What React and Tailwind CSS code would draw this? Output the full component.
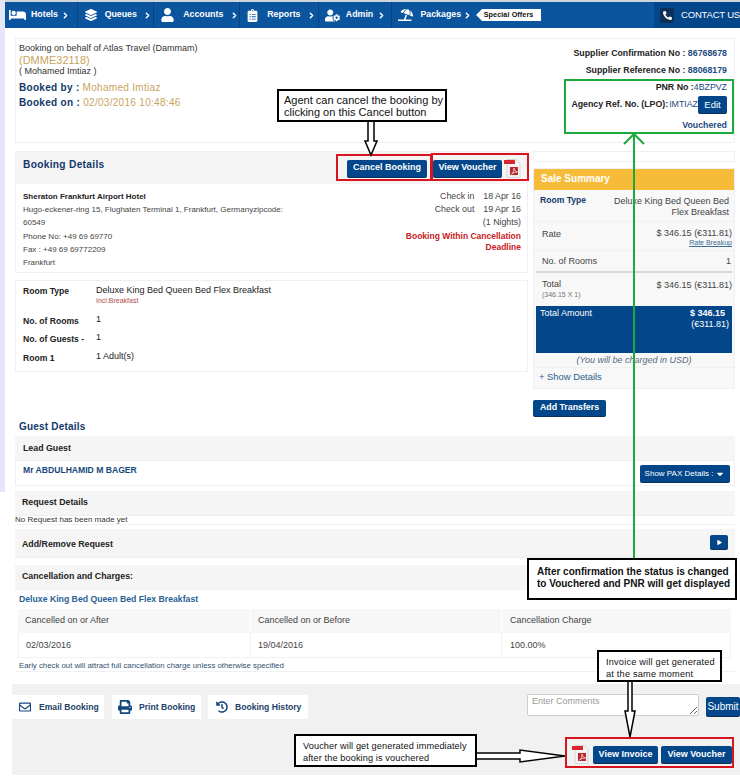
import { FaBed, FaLayerGroup, FaUser, FaUserCog, FaUmbrellaBeach, FaPhone, FaPrint, FaHistory, FaRegEnvelope, FaClipboardList, FaCaretDown, FaPlay } from 'react-icons/fa';
import { ChevronRight } from 'lucide-react';

const navItems = [
  { label: 'Hotels', icon: FaBed, width: 'w-[73px]', iconSize: 'w-[17px] h-[14px] ml-[4px]', gap: 'gap-[5px]' },
  { label: 'Queues', icon: FaLayerGroup, width: 'w-[77px]', iconSize: 'w-[12px] h-[12px] ml-[7px]', gap: 'gap-[8px]' },
  { label: 'Accounts', icon: FaUser, width: 'w-[86px]', iconSize: 'w-[13px] h-[14px] ml-[7px]', gap: 'gap-[9px]' },
  { label: 'Reports', icon: FaClipboardList, width: 'w-[79px]', iconSize: 'w-[11px] h-[13px] ml-[7px]', gap: 'gap-[9px]' },
  { label: 'Admin', icon: FaUserCog, width: 'w-[74px]', iconSize: 'w-[15px] h-[13px] ml-[6px]', gap: 'gap-[6px]' },
];

function PdfIcon() {
  return (
    <svg width="17" height="19" viewBox="0 0 17 19" className="shrink-0">
      <path d="M3 0.5h9l4 4v14H3z" fill="#f4f4f4" stroke="#d5d5d5" />
      <rect x="0" y="1" width="11" height="4" fill="#d8262c" />
      <rect x="6" y="8" width="8" height="8" fill="#b8272c" />
      <path d="M7.5 15c2-1.5 2.5-3.5 2.5-6 .5 2.5 1.5 3.5 3.5 4-2 0-4 .5-6 2z" fill="none" stroke="#fff" strokeWidth="0.7" />
    </svg>
  );
}

function BlueButton({ children, className = '' }) {
  return (
    <button className={`bg-[#03478a] text-white font-bold rounded-[2px] flex items-center justify-center whitespace-nowrap shadow-[0_1px_0_#0a2f5a] ${className}`}>
      {children}
    </button>
  );
}

function Callout({ className, children }) {
  return (
    <div className={`absolute bg-white border-2 border-black text-[#111] leading-[12px] ${className}`}>
      {children}
    </div>
  );
}

function GrayHead({ children, className = '' }) {
  return (
    <div className={`bg-[#f5f5f5] flex items-center justify-between text-[8.8px] font-bold text-[#222] ${className}`}>
      {children}
    </div>
  );
}

export default function App() {
  return (
    <div className="relative w-[740px] h-[777px] overflow-hidden bg-white text-[#333] font-['Liberation_Sans',Arial,sans-serif]">
      <div className="absolute left-0 top-0 w-[5px] h-[492px] bg-[#e6e6fb]" />

      {/* nav */}
      <div className="h-[2px] bg-[#cfd3da]" />
      <nav className="ml-[5px] h-[26px] bg-[#0b559f] flex items-center text-white text-[8.8px] font-bold">
        {navItems.map((item) => {
          const Icon = item.icon;
          return (
            <div key={item.label} className={`${item.width} h-full flex items-center ${item.gap} border-r border-[#094480]`}>
              <Icon className={`${item.iconSize} shrink-0`} />
              <span>{item.label}</span>
              <ChevronRight size={9} strokeWidth={4} className="-ml-[2px]" />
            </div>
          );
        })}
        <div className="flex items-center h-full w-[263px]">
          <FaUmbrellaBeach className="w-[15px] h-[14px] ml-[6px] shrink-0" />
          <span className="ml-[7px]">Packages</span>
          <ChevronRight size={9} strokeWidth={4} className="ml-[2px]" />
          <span className="ml-[4px] h-[12px] w-[65px] bg-white text-[#111] text-[7.2px] tracking-[0.1px] flex items-center justify-center [clip-path:polygon(6px_0,100%_0,100%_100%,6px_100%,0_50%)]">
            Special Offers
          </span>
        </div>
        <div className="flex-1 h-full bg-[#03478a] flex items-center gap-[7px] pl-[6px] font-normal text-[9.5px] tracking-[-0.2px] whitespace-nowrap">
          <span className="w-[14px] h-[15px] bg-[#0f2f57] rounded-[2px] flex items-center justify-center">
            <FaPhone className="w-[9px] h-[9px] scale-x-[-1]" />
          </span>
          CONTACT US
        </div>
      </nav>

      <main className="ml-[15px] w-[720px]">
        {/* booking head */}
        <section className="mt-[10px] h-[105px] border border-[#eef0f5] flex justify-between pl-[3px] pr-[7px] text-[9px]">
          <div className="pt-[4px]">
            <div className="leading-[11px]">Booking on behalf of Atlas Travel (Dammam)</div>
            <div className="text-[11px] leading-[12px] text-[#c9a35e]">(DMME32118)</div>
            <div className="leading-[11px]">( Mohamed Imtiaz )</div>
            <div className="mt-[3px] text-[10px] leading-[15px] font-bold text-[#12386a] tracking-[0.3px]">
              Booked by : <span className="font-normal text-[#c9a35e]">Mohamed Imtiaz</span>
            </div>
            <div className="text-[10px] leading-[15px] font-bold text-[#12386a] tracking-[0.3px]">
              Booked on : <span className="font-normal text-[#c9a35e]">02/03/2016 10:48:46</span>
            </div>
          </div>
          <div className="pt-[6px] text-right text-[8.8px] font-bold text-[#222] leading-[17px]">
            <div>Supplier Confirmation No : <span className="text-[#1d4a80]">86768678</span></div>
            <div>Supplier Reference No : <span className="text-[#1d4a80]">88068179</span></div>
            <div className="leading-[17px]">PNR No :<span className="font-normal text-[#1d4a80]">4BZPVZ</span></div>
            <div className="flex items-center justify-end h-[17px]">
              Agency Ref. No. (LPO):<span className="ml-[1px] font-normal text-[#1d4a80]">IMTIAZ</span>
              <BlueButton className="w-[29px] h-[17px] text-[9.5px] font-normal">Edit</BlueButton>
            </div>
            <div className="mt-[4px] text-[#1d4a80]">Vouchered</div>
          </div>
        </section>

        <div className="mt-[8px] flex gap-[5px]">
          {/* left column */}
          <div className="w-[513px]">
            <div className="border border-[#eef0f5] h-[122px]">
              <div className="bg-[#f5f5f5] h-[32px] flex items-center justify-between pl-[7px] pr-[6px]">
                <h2 className="text-[10.2px] font-bold text-[#12386a] tracking-[0.3px] -mt-[7px]">Booking Details</h2>
                <div className="flex items-center">
                  <BlueButton className="w-[80px] h-[17px] text-[9px]">Cancel Booking</BlueButton>
                  <BlueButton className="ml-[6px] w-[69px] h-[17px] text-[9px]">View Voucher</BlueButton>
                  <span className="ml-[2px]"><PdfIcon /></span>
                </div>
              </div>
              <div className="flex justify-between pl-[7px] pr-[6px] text-[8px] text-[#444]">
                <div className="w-[290px] pt-[6px] leading-[13.2px]">
                  <div className="font-bold text-[#222]">Sheraton Frankfurt Airport Hotel</div>
                  <div>Hugo-eckener-ring 15, Flughaten Terminal 1, Frankfurt, Germanyzipcode:</div>
                  <div>60549</div>
                  <div>Phone No: +49 69 69770</div>
                  <div>Fax : +49 69 69772209</div>
                  <div>Frankfurt</div>
                </div>
                <div className="w-[140px] text-right text-[8.8px] pt-[6px] leading-[13px]">
                  <div className="flex justify-end gap-[9px]"><span>Check in</span><span>18 Apr 16</span></div>
                  <div className="flex justify-end gap-[9px]"><span>Check out</span><span>19 Apr 16</span></div>
                  <div>(1 Nights)</div>
                  <div className="mt-[2px] text-[8.5px] leading-[10.5px] font-bold text-[#c9201f]">Booking Within Cancellation Deadline</div>
                </div>
              </div>
            </div>

            <div className="mt-[7px] h-[92px] border border-[#eef0f5] pl-[7px] text-[9px] text-[#222]">
              <div className="flex pt-[4px] h-[33px]">
                <b className="w-[73px] text-[8.6px]">Room Type</b>
                <div>
                  <div className="leading-[11px]">Deluxe King Bed Queen Bed Flex Breakfast</div>
                  <div className="text-[7px] leading-[9px] text-[#b04a4a]">Incl:Breakfast</div>
                </div>
              </div>
              <div className="flex h-[19px] pt-[1px]"><b className="w-[73px] text-[8.6px]">No. of Rooms</b><span className="-mt-[2px]">1</span></div>
              <div className="flex h-[19px]"><b className="w-[73px] text-[8.6px]">No. of Guests -</b><span className="-mt-[2px]">1</span></div>
              <div className="flex h-[16px]"><b className="w-[73px] text-[8.6px]">Room 1</b><span className="-mt-[2px]">1 Adult(s)</span></div>
            </div>
          </div>

          {/* sale summary */}
          <aside className="w-[202px]">
            <div className="h-[11px] border border-[#eef0f5]" />
            <div className="mt-[6px] border border-[#eef0f5] bg-[#f8f8f8] text-[9px] text-[#444]">
              <div className="h-[21px] bg-[#f7bb3a] text-white font-bold text-[10px] flex items-center pl-[7px] pb-[2px]">Sale Summary</div>
              <div className="h-[32px] flex justify-between pl-[6px] pr-[5px] pt-[4px] border-b border-[#f1f1f1]">
                <b className="text-[#12386a] text-[8.6px]">Room Type</b>
                <div className="w-[122px] text-right leading-[10.5px] pt-[2px]">Deluxe King Bed Queen Bed Flex Breakfast</div>
              </div>
              <div className="h-[29px] flex justify-between pl-[8px] pr-[2px] pt-[6px] border-b border-[#f1f1f1]">
                <span>Rate</span>
                <div className="text-right leading-[10px]">
                  <div>$ 346.15 (€311.81)</div>
                  <div className="text-[7px] underline text-[#3a6c94]">Rate Breakup</div>
                </div>
              </div>
              <div className="mx-[2px] h-[22px] flex justify-between pl-[6px] pr-[1px] pt-[4px] border-b-2 border-[#d8d8d8]"><span>No. of Rooms</span><span>1</span></div>
              <div className="h-[33px] flex justify-between pl-[8px] pr-[2px] pt-[6px]">
                <div className="leading-[11px]">Total<div className="text-[7px] leading-[9px] text-[#777]">(346.15 X 1)</div></div>
                <span>$ 346.15 (€311.81)</span>
              </div>
              <div className="mx-[2px] h-[47px] bg-[#03478a] text-white flex justify-between pl-[4px] pr-[3px] pt-[2px] leading-[10.5px]">
                <span>Total Amount</span>
                <div className="text-right"><b className="pr-[4px]">$ 346.15</b><br /><b className="font-normal">(€311.81)</b></div>
              </div>
              <div className="h-[15px] text-center italic text-[#5a6a80] border-b border-[#f1f1f1] leading-[15px]">(You will be charged in USD)</div>
              <div className="h-[21px] pl-[5px] flex items-center text-[#2a5f8f] text-[9.4px] -mt-[1px]">+ Show Details</div>
            </div>
            <BlueButton className="mt-[11px] w-[73px] h-[16px] text-[8.8px]">Add Transfers</BlueButton>
          </aside>
        </div>

        {/* guest details */}
        <h2 className="mt-[4px] pl-[4px] h-[13px] text-[10px] leading-[13px] font-bold text-[#12386a] tracking-[0.2px]">Guest Details</h2>
        <GrayHead className="mt-[3px] h-[25px] pl-[8px] pt-[1px] border-b border-[#eeeeee]">Lead Guest</GrayHead>
        <div className="h-[25px] border border-t-0 border-[#eef0f5] flex items-start justify-between pl-[7px] pr-[4px] text-[8.6px] font-bold text-[#14477c]">
          <span className="pt-[3px]">Mr ABDULHAMID M BAGER</span>
          <BlueButton className="mt-[4px] w-[90px] h-[17px] text-[8px] font-normal gap-[2px]">Show PAX Details : <FaCaretDown className="w-[10px] h-[10px]" /></BlueButton>
        </div>
        <GrayHead className="mt-[5px] h-[25px] pl-[7px] border-b border-[#eeeeee]">Request Details</GrayHead>
        <div className="h-[10px] -mt-[1px] mb-[1px] border-b border-[#eef0f5] text-[8px] leading-[10px] text-[#333]">No Request has been made yet</div>
        <GrayHead className="mt-[4px] h-[29px] pl-[7px] pr-[7px] border-b border-[#eeeeee]">
          <span className="pt-[3px]">Add/Remove Request</span>
          <BlueButton className="w-[18px] h-[14px] -mt-[2px]"><FaPlay className="w-[5px] h-[5px]" /></BlueButton>
        </GrayHead>

        <GrayHead className="mt-[7px] h-[25px] pl-[7px] pb-[2px]">Cancellation and Charges:</GrayHead>
        <div className="h-[82px] border-b border-[#eef0f5]">
          <div className="h-[19px] pl-[4px] text-[8.7px] font-bold leading-[18px] text-[#2a5f95]">Deluxe King Bed Queen Bed Flex Breakfast</div>
          <div className="ml-[3px] w-[713px] grid grid-cols-[233px_251px_229px] text-[9px] text-[#444]">
            <div className="h-[24px] bg-[#f7f7f7] border-r border-white pl-[7px] flex items-center">Cancelled on or After</div>
            <div className="h-[24px] bg-[#f7f7f7] border-r border-white pl-[7px] flex items-center">Cancelled on or Before</div>
            <div className="h-[24px] bg-[#f7f7f7] pl-[8px] flex items-center">Cancellation Charge</div>
            <div className="h-[25px] border border-t-0 border-[#f1f1f1] pl-[7px] pt-[2px] flex items-center">02/03/2016</div>
            <div className="h-[25px] border-b border-r border-[#f1f1f1] pl-[7px] pt-[2px] flex items-center">19/04/2016</div>
            <div className="h-[25px] border-b border-r border-[#f1f1f1] pl-[8px] pt-[2px] flex items-center">100.00%</div>
          </div>
          <div className="pl-[4px] mt-[3px] text-[7.8px] leading-[10px] text-[#2f4f6f]">Early check out will attract full cancellation charge unless otherwise specified</div>
        </div>
      </main>

      {/* footer */}
      <footer className="mt-[12px] ml-[12px] h-[91px] bg-[#f1f1f1] flex justify-between pt-[11px]">
        <div className="flex items-start text-[8.6px] font-bold text-[#1d4168] whitespace-nowrap">
          <div className="w-[92px] h-[24px] bg-white flex items-center pl-[5px] gap-[6px]"><FaRegEnvelope className="w-[16px] h-[12px] text-[#14477c]" />Email Booking</div>
          <div className="ml-[8px] w-[89px] h-[24px] bg-white flex items-center pl-[6px] gap-[7px]"><FaPrint className="w-[14px] h-[14px] text-[#14477c]" />Print Booking</div>
          <div className="ml-[7px] w-[100px] h-[24px] bg-white flex items-center pl-[8px] gap-[7px]"><FaHistory className="w-[12px] h-[12px] text-[#14477c]" />Booking History</div>
        </div>
        <div className="w-[213px] flex flex-col items-end">
          <div className="flex w-full items-start -mt-[1px]">
            <textarea placeholder="Enter Comments" className="w-[172px] h-[22px] bg-white border border-[#ccc] rounded-[2px] px-[4px] text-[9px] placeholder:text-[#999]" />
            <BlueButton className="ml-[7px] mt-[3px] w-[34px] h-[19px] text-[10px] font-normal">Submit</BlueButton>
          </div>
          <div className="mt-[29px] flex items-center pr-[8px]">
            <PdfIcon />
            <BlueButton className="ml-[4px] w-[65px] h-[17px] text-[9px]">View Invoice</BlueButton>
            <BlueButton className="ml-[3px] w-[71px] h-[17px] text-[9px]">View Voucher</BlueButton>
          </div>
        </div>
      </footer>

      {/* annotations drawn on top of the screenshot */}
      <div className="absolute left-[336px] top-[154px] w-[96px] h-[27px] border-2 border-[#d8141f]" />
      <div className="absolute left-[431px] top-[153px] w-[98px] h-[28px] border-2 border-[#d8141f]" />
      <div className="absolute left-[564px] top-[79px] w-[170px] h-[55px] border-2 border-[#1bab3c]" />
      <div className="absolute left-[565px] top-[737px] w-[169px] h-[31px] border-2 border-[#d8141f]" />

      <svg className="absolute left-0 top-0 pointer-events-none" width="740" height="777" viewBox="0 0 740 777">
        <path d="M634 558V134M624 144l10-10 10 10" fill="none" stroke="#1bab3c" strokeWidth="2" />
        <path d="M368 121v20h-3l6 14 6-14h-3v-20z" fill="#fff" stroke="#000" strokeWidth="1.5" />
        <path d="M628 681v30h-3l5 26 5-26h-3v-30z" fill="#fff" stroke="#000" strokeWidth="1.5" />
        <path d="M476 753h44v-3l45 6-45 6v-3h-44z" fill="#fff" stroke="#000" strokeWidth="1.5" />
      </svg>

      <Callout className="left-[277px] top-[89px] w-[170px] h-[33px] pl-[5px] pt-[3px] text-[11px]">
        Agent can cancel the booking by clicking on this Cancel button
      </Callout>
      <Callout className="left-[527px] top-[558px] w-[210px] h-[42px] pl-[8px] pt-[6px] text-[10px] font-bold">
        After confirmation the status is changed to Vouchered and PNR will get displayed
      </Callout>
      <Callout className="left-[597px] top-[650px] w-[125px] h-[32px] pl-[7px] pt-[4px] text-[9.2px] tracking-[0.2px]">
        Invoice will get generated at the same moment
      </Callout>
      <Callout className="left-[294px] top-[734px] w-[183px] h-[33px] pl-[7px] pt-[4px] text-[9.2px] tracking-[0.1px]">
        Voucher will get generated immediately after the booking is vouchered
      </Callout>
    </div>
  );
}
